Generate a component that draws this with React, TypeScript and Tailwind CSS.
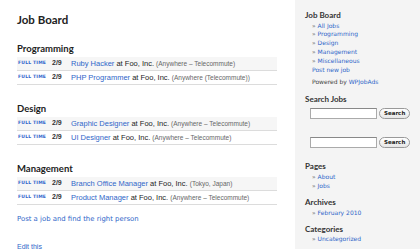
import React from 'react';

// Job board page: listings on the left, widget sidebar on the right

interface Job {
  date: string;
  title: string;
  company: string;
  location: string;
}

interface Section {
  name: string;
  jobs: Job[];
}

const sections: Section[] = [
  {
    name: 'Programming',
    jobs: [
      { date: '2/9', title: 'Ruby Hacker', company: 'Foo, Inc.', location: 'Anywhere – Telecommute' },
      { date: '2/9', title: 'PHP Programmer', company: 'Foo, Inc.', location: 'Anywhere (Telecommute)' },
    ],
  },
  {
    name: 'Design',
    jobs: [
      { date: '2/9', title: 'Graphic Designer', company: 'Foo, Inc.', location: 'Anywhere – Telecommute' },
      { date: '2/9', title: 'UI Designer', company: 'Foo, Inc.', location: 'Anywhere – Telecommute' },
    ],
  },
  {
    name: 'Management',
    jobs: [
      { date: '2/9', title: 'Branch Office Manager', company: 'Foo, Inc.', location: 'Tokyo, Japan' },
      { date: '2/9', title: 'Product Manager', company: 'Foo, Inc.', location: 'Anywhere – Telecommute' },
    ],
  },
];

const JobRow: React.FC<{ job: Job; odd: boolean }> = ({ job, odd }) => (
  <div
    className={`flex items-center h-[14px] border-b border-[#dcdcdc] ${odd ? 'bg-[#f6f6f6]' : 'bg-white'}`}
  >
    <span className="w-[35px] pl-[1px] text-[4.5px] font-bold tracking-[0.2px] text-[#3366cc] font-['DejaVu_Sans',sans-serif]">
      FULL TIME
    </span>
    <span className="w-[19px] text-[7px] font-bold text-[#333]">{job.date}</span>
    <span className="text-[7.5px] text-[#222]">
      <a className="text-[#2f66c9]">{job.title}</a> at {job.company}{' '}
      <span className="text-[6.5px] text-[#666]">({job.location})</span>
    </span>
  </div>
);

const SideList: React.FC<{ items: string[] }> = ({ items }) => (
  <ul className="pl-[7px] mt-[1.5px]">
    {items.map((item) => (
      <li key={item} className="text-[6px] leading-[8.75px] text-[#555]">
        » <a className="text-[#2f66c9]">{item}</a>
      </li>
    ))}
  </ul>
);

const SearchBox: React.FC = () => (
  <div className="flex items-center gap-[2px] pl-[5px]">
    <div className="w-[67px] h-[11px] bg-white border border-[#aaa] border-t-[#888]" />
    <button className="h-[11px] px-[4px] rounded-full border border-[#999] bg-gradient-to-b from-white to-[#e6e6e6] text-[5.5px] font-bold leading-none text-[#222]">
      Search
    </button>
  </div>
);

const SideHeading: React.FC<{ children: React.ReactNode }> = ({ children }) => (
  <h3 className="text-[8px] font-bold leading-[10px] text-[#333] font-['Lato',sans-serif]">{children}</h3>
);

export default function App() {
  return (
    <div className="flex w-[420px] h-[249px] overflow-hidden bg-white font-['Liberation_Sans',Arial,sans-serif]">
      {/* Main column */}
      <div className="flex-1 pl-[17px] pr-[18px] pt-[12px]">
        <h1 className="text-[11.5px] font-bold leading-[16px] text-[#222] font-['Lato',sans-serif]">
          Job Board
        </h1>
        <div className="mt-[14px]">
          {sections.map((section) => (
            <div key={section.name} className="mb-[17px]">
              <h2 className="text-[9.5px] font-bold leading-[14px] mb-[1px] text-[#222] font-['Lato',sans-serif]">
                {section.name}
              </h2>
              {section.jobs.map((job, i) => (
                <JobRow key={job.title} job={job} odd={i === 0} />
              ))}
            </div>
          ))}
        </div>
        <a className="block -mt-[9px] text-[6.9px] leading-[12px] text-[#2f66c9] font-['DejaVu_Sans',sans-serif]">
          Post a job and find the right person
        </a>
        <a className="block mt-[17px] text-[7px] leading-[10px] text-[#2f66c9]">Edit this</a>
      </div>

      {/* Sidebar */}
      <div className="w-[125px] shrink-0 bg-[#f4f4f4] pl-[10px] pt-[10px] font-['DejaVu_Sans',sans-serif]">
        <SideHeading>Job Board</SideHeading>
        <SideList items={['All Jobs', 'Programming', 'Design', 'Management', 'Miscellaneous']} />
        <a className="block pl-[7px] text-[6px] leading-[10px] text-[#2f66c9]">Post new job</a>
        <p className="pl-[7px] mt-[1px] text-[6px] leading-[11px] text-[#444]">
          Powered by <a className="text-[#2f66c9]">WPJobAds</a>
        </p>

        <div className="mt-[7px]">
          <SideHeading>Search Jobs</SideHeading>
          <div className="mt-[4px]">
            <SearchBox />
          </div>
          <div className="mt-[18px]">
            <SearchBox />
          </div>
        </div>

        <div className="mt-[13px]">
          <SideHeading>Pages</SideHeading>
          <SideList items={['About', 'Jobs']} />
        </div>
        <div className="mt-[7px]">
          <SideHeading>Archives</SideHeading>
          <SideList items={['February 2010']} />
        </div>
        <div className="mt-[6px]">
          <SideHeading>Categories</SideHeading>
          <SideList items={['Uncategorized']} />
        </div>
      </div>
    </div>
  );
}
